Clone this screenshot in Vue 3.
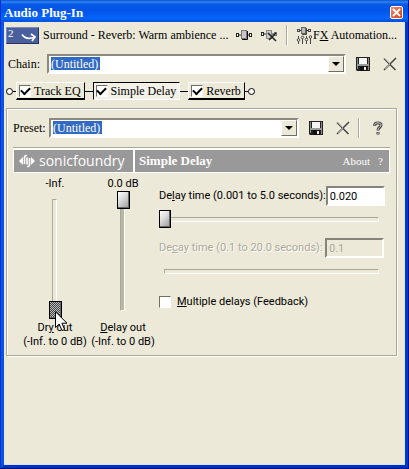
<script setup>
import { ref } from 'vue'

const chain = ref('(Untitled)')
const preset = ref('(Untitled)')
const plugins = ref([
  { id: 'eq', name: 'Track EQ', on: true, active: false },
  { id: 'delay', name: 'Simple Delay', on: true, active: true },
  { id: 'reverb', name: 'Reverb', on: true, active: false }
])
const dryOut = ref(0)
const delayOut = ref(100)
const delayPos = ref(0)
const decayPos = ref(0)
const delayTime = ref('0.020')
const decayTime = ref('0.1')
const feedback = ref(false)
</script>

<template>
  <div class="window">
    <header class="titlebar">
      <h1>Audio Plug-In</h1>
      <button class="close" type="button" aria-label="Close">
        <svg width="9" height="9" viewBox="0 0 9 9"><path d="M1 1L8 8M8 1L1 8" stroke="#fff" stroke-width="1.8" /></svg>
      </button>
    </header>

    <main class="body">
      <div class="toolbar">
        <div class="badge">
          <span class="num">2</span>
          <svg class="swoosh" width="18" height="12" viewBox="0 0 18 12"><path d="M2 3.500C5 8 9 8 14 6.500M11 3L15 6L12 10" fill="none" stroke="#fff" stroke-width="1.700" /></svg>
        </div>
        <span class="track">Surround - Reverb: Warm ambience ...</span>
        <button class="icon" type="button" aria-label="Plug-in chooser">
          <svg width="16" height="12" viewBox="0 0 16 12">
            <path d="M2 6H14" stroke="#222" />
            <rect x=".5" y="4.500" width="2" height="3" fill="#fff" stroke="#222" />
            <rect x="13.500" y="4.500" width="2" height="3" fill="#fff" stroke="#222" />
            <rect x="5.500" y="1.500" width="5" height="8" fill="#c8c8c8" stroke="#777" />
            <path d="M11.500 2V10.500H6" fill="none" stroke="#111" />
          </svg>
        </button>
        <button class="icon remove" type="button" aria-label="Remove plug-in">
          <svg width="17" height="14" viewBox="0 0 17 14">
            <path d="M2 6H14" stroke="#222" />
            <rect x=".5" y="4.500" width="2" height="3" fill="#fff" stroke="#222" />
            <rect x="13.500" y="4.500" width="2" height="3" fill="#fff" stroke="#777" />
            <rect x="5.500" y="2.500" width="5" height="8" fill="#c8c8c8" stroke="#888" />
            <path d="M7 5L15 13M15 5L8 12" stroke="#222" stroke-width="1.600" />
          </svg>
        </button>
        <span class="sep"></span>
        <button class="fx" type="button">
          <svg width="16" height="17" viewBox="0 0 16 17">
            <path d="M3 3.500H13" stroke="#222" />
            <rect x="1.500" y="2.500" width="2" height="2" fill="#fff" stroke="#444" />
            <rect x="12.500" y="2.500" width="2" height="2" fill="#fff" stroke="#444" />
            <rect x="5.500" y=".5" width="4" height="6" fill="#bbb" stroke="#666" />
            <path d="M10.500 1V7.500H6M2.500 9V17M6.500 9V17M10.500 9V17M14.500 9V17" fill="none" stroke="#444" />
            <g fill="#fff" stroke="#444">
              <circle cx="2.500" cy="13" r="1.300" /><circle cx="6.500" cy="10.500" r="1.300" />
              <circle cx="10.500" cy="12.500" r="1.300" /><circle cx="14.500" cy="10" r="1.300" />
            </g>
          </svg>
          <span>F<u>X</u> Automation...</span>
        </button>
      </div>

      <div class="row chain-row">
        <label for="chain">Chain:</label>
        <div class="combo">
          <select id="chain" v-model="chain"><option>(Untitled)</option></select>
          <span class="drop"></span>
        </div>
        <button class="icon save" type="button" aria-label="Save chain">
          <svg width="14" height="14" viewBox="0 0 14 14">
            <path d="M0 0H14V14H1L0 13Z" fill="#222" /><path d="M1 1H2V12H1ZM12 1H13V13H12Z" fill="#8c8c8c" />
            <rect x="3" y="1" width="8" height="6" fill="#f4f4f4" /><rect x="1" y="7" width="12" height="2" fill="#9a9a9a" />
            <rect x="4" y="9" width="7" height="5" fill="#111" /><rect x="8" y="10" width="2" height="3" fill="#eee" />
          </svg>
        </button>
        <button class="icon" type="button" aria-label="Delete chain">
          <svg width="14" height="14" viewBox="0 0 14 14">
            <path d="M1 1.500L12.500 13M13 1L1 13" stroke="#444" stroke-width="1.500" /><path d="M1 .8L7 7M7 7L2 12" stroke="#bbb" stroke-width=".8" />
          </svg>
        </button>
      </div>

      <div class="signal">
        <span class="node"></span><span class="wire short"></span>
        <template v-for="(p, i) in plugins" :key="p.id">
          <span v-if="i" class="wire"></span>
          <label class="plug" :class="{ active: p.active }">
            <input v-model="p.on" type="checkbox" class="tick" />
            <span>{{ p.name }}</span>
          </label>
        </template>
        <span class="wire short"></span><span class="node"></span>
      </div>

      <section class="panel">
        <div class="row">
          <label for="preset">Preset:</label>
          <div class="combo">
            <select id="preset" v-model="preset"><option>(Untitled)</option></select>
            <span class="drop"></span>
          </div>
          <button class="icon save" type="button" aria-label="Save preset">
            <svg width="14" height="14" viewBox="0 0 14 14">
              <path d="M0 0H14V14H1L0 13Z" fill="#222" /><path d="M1 1H2V12H1ZM12 1H13V13H12Z" fill="#8c8c8c" />
              <rect x="3" y="1" width="8" height="6" fill="#f4f4f4" /><rect x="1" y="7" width="12" height="2" fill="#9a9a9a" />
              <rect x="4" y="9" width="7" height="5" fill="#111" /><rect x="8" y="10" width="2" height="3" fill="#eee" />
            </svg>
          </button>
          <button class="icon" type="button" aria-label="Delete preset">
            <svg width="14" height="14" viewBox="0 0 14 14">
              <path d="M1 1.500L12.500 13M13 1L1 13" stroke="#444" stroke-width="1.500" /><path d="M1 .8L7 7M7 7L2 12" stroke="#bbb" stroke-width=".8" />
            </svg>
          </button>
          <span class="sep"></span>
          <button class="icon help" type="button" aria-label="Help">
            <svg width="10" height="14" viewBox="0 0 10 14">
              <path d="M1.800 5V3.500C2 1.500 8 1 8 4C8 6.500 5 6 5 9.500M5 11V13.500" fill="none" stroke="#444" stroke-width="3" />
              <path d="M1.800 4.500V3.500C2 1.500 8 1 8 4C8 6.500 5 6 5 9M5 11.500V13" fill="none" stroke="#ddd" stroke-width="1" />
            </svg>
          </button>
        </div>

        <div class="banner">
          <div class="brand">
            <svg width="16" height="14" viewBox="0 0 16 14">
              <path d="M0 7L4 3V11ZM16 7L12 3V11Z" fill="#fff" />
              <path d="M8 1.500Q5.500 1 5.500 4V10M8 12.500Q10.500 13 10.500 10V4M8 3.500V10.500" fill="none" stroke="#fff" stroke-width="1.600" />
            </svg>
            <span>sonicfoundry</span>
          </div>
          <div class="name">
            <h2>Simple Delay</h2>
            <a href="#about">About</a>
            <a href="#help">?</a>
          </div>
        </div>

        <div class="controls">
          <div class="fader">
            <output for="dry">-Inf.</output>
            <div class="vslot">
              <input id="dry" v-model="dryOut" type="range" min="0" max="100" class="focused" />
              <svg class="pointer" width="13" height="21" viewBox="0 0 13 21">
                <path d="M.5 .8V16.500L4.200 13L7 19.500L9.600 18.400L6.900 12.200H12Z" fill="#fff" stroke="#000" />
              </svg>
            </div>
            <label for="dry">Dr<u>y</u> out<br />(-Inf. to 0 dB)</label>
          </div>
          <div class="fader">
            <output for="wet">0.0 dB</output>
            <div class="vslot filled">
              <input id="wet" v-model="delayOut" type="range" min="0" max="100" />
            </div>
            <label for="wet"><u>D</u>elay out<br />(-Inf. to 0 dB)</label>
          </div>

          <div class="times">
            <div class="field">
              <label for="delay">De<u>l</u>ay time (0.001 to 5.0 seconds):</label>
              <input id="delay" v-model="delayTime" type="text" />
            </div>
            <div class="hslot">
              <input v-model="delayPos" type="range" min="0" max="100" aria-label="Delay time" />
            </div>
            <div class="field off">
              <label for="decay">De<u>c</u>ay time (0.1 to 20.0 seconds):</label>
              <input id="decay" v-model="decayTime" type="text" disabled />
            </div>
            <div class="hslot">
              <input v-model="decayPos" type="range" min="0" max="100" disabled aria-label="Decay time" />
            </div>
            <label class="check">
              <input v-model="feedback" type="checkbox" class="tick" />
              <span><u>M</u>ultiple delays (Feedback)</span>
            </label>
          </div>
        </div>
      </section>
    </main>
  </div>
</template>

<style>
body {
  background: #ece9d8;
}
</style>

<style scoped>
* {
  box-sizing: border-box;
}
.window {
  display: flex;
  flex-direction: column;
  min-height: 100vh;
  border: solid;
  border-width: 0 1px 1px;
  border-color: #0831d9 #00138c #00138c #0831d9;
  background: #ece9d8;
  color: #000;
  font-family: "Liberation Serif", serif;
  font-size: 12px;
  line-height: 16px;
}
.titlebar {
  display: flex;
  align-items: center;
  justify-content: space-between;
  height: 22px;
  padding: 3px 5px 0 3px;
  background: linear-gradient(#0a50c8 0, #2f86f5 2px, #0a5ae6 4px, #0054e6 10px, #0664fc 18px, #0050d8 22px);
}
h1 {
  margin: 0;
  color: #fff;
  font-size: 13px;
  line-height: 16px;
}
.close {
  display: flex;
  align-items: center;
  justify-content: center;
  width: 13px;
  height: 13px;
  padding: 0;
  border: 1px solid #fff;
  border-radius: 2px;
  background: linear-gradient(135deg, #f08a6c, #d8401c);
}
.body {
  flex: 1;
  padding: 2px 8px 4px 2px;
  border: solid;
  border-width: 0 3px 3px;
  border-color: #0a55e0 #0038c0 #0030c0 #0a55e0;
  box-shadow: inset -1px -1px 0 #d4e4f4;
}
button,
input,
select {
  margin: 0;
  color: inherit;
  font: inherit;
}
.toolbar {
  display: flex;
  align-items: center;
  height: 22px;
}
.badge {
  display: flex;
  width: 33px;
  height: 17px;
  padding-left: 1px;
  border: solid 1px;
  border-color: #7c8cc0 #26325e #26325e #7c8cc0;
  background: #4a5f9e;
  color: #fff;
}
.num {
  font-size: 11px;
  line-height: 10px;
}
.swoosh {
  margin: 3px 0 0 6px;
}
.track {
  flex: 1;
  padding-left: 4px;
  white-space: nowrap;
}
.icon {
  display: flex;
  flex: none;
  margin-left: 13px;
  padding: 0;
  border: 0;
  background: none;
}
.toolbar .icon {
  margin-left: 6px;
}
.toolbar .remove {
  margin-left: 9px;
}
.sep {
  width: 2px;
  height: 20px;
  margin: 0 0 0 8px;
  border-left: 1px solid #aca899;
  border-right: 1px solid #fff;
}
.fx {
  display: flex;
  align-items: center;
  gap: 1px;
  margin-left: 8px;
  padding: 0;
  border: 0;
  background: none;
  white-space: nowrap;
}
.row {
  display: flex;
  align-items: center;
}
.row label {
  flex: none;
  width: 36px;
}
.chain-row {
  margin-top: 8px;
  padding-left: 2px;
}
.chain-row label {
  width: 39px;
}
.combo {
  position: relative;
  flex: 1;
  height: 20px;
  border: 2px solid;
  border-color: #8c8a7c #fff #fff #8c8a7c;
}
.combo select {
  display: block;
  width: 100%;
  height: 16px;
  padding: 0 18px 0 2px;
  border: 0;
  border-radius: 0;
  outline: 0;
  appearance: none;
  background: linear-gradient(#316ac5, #316ac5) 2px 1px / 49px 13px no-repeat #fff;
  color: #fff;
  line-height: 15px;
}
.drop {
  position: absolute;
  top: 0;
  right: 0;
  display: flex;
  align-items: center;
  justify-content: center;
  width: 16px;
  height: 16px;
  border: 1px solid;
  border-color: #fff #716f64 #716f64 #fff;
  background: #ece9d8;
  pointer-events: none;
}
.drop::after {
  content: "";
  border: 4px solid transparent;
  border-top-color: #000;
  border-bottom: 0;
}
.signal {
  display: flex;
  align-items: center;
  margin-top: 8px;
}
.node {
  width: 7px;
  height: 7px;
  border: 1px solid #000;
  border-radius: 50%;
  background: #fff;
}
.wire {
  width: 8px;
  height: 1px;
  background: #000;
}
.short {
  width: 3px;
}
.plug {
  display: flex;
  align-items: center;
  gap: 3px;
  height: 18px;
  padding: 0 3px 0 2px;
  border: solid;
  border-width: 1px 1px 2px 1px;
  border-color: #fff #000 #000 #fff;
  white-space: nowrap;
}
.plug.active {
  border-width: 1px;
  border-color: #000 #fff #fff #000;
  background: #f3f1e8;
}
.tick {
  display: grid;
  flex: none;
  place-items: center;
  width: 12px;
  height: 12px;
  border: 1px solid;
  border-color: #716f64 #fff #fff #716f64;
  appearance: none;
  background: #fff;
}
.tick:checked::after {
  content: "";
  width: 7px;
  height: 4px;
  margin-top: -2px;
  border: solid #000;
  border-width: 0 0 2px 2px;
  transform: rotate(-45deg);
}
.panel {
  margin-top: 8px;
  padding: 9px 6px 6px;
  border: 1px solid #aca899;
  box-shadow: inset 1px 1px 0 #fff, 1px 1px 0 #fff;
}
.icon.save {
  margin-left: 10px;
}
.help {
  margin: 0 7px 0 13px;
}
.banner {
  display: flex;
  gap: 2px;
  margin-top: 9px;
  padding: 2px 1px 1px;
  border-top: 1px solid #aca899;
  background: #fff;
  color: #fff;
}
.brand {
  display: flex;
  flex: none;
  align-items: center;
  gap: 4px;
  width: 119px;
  height: 22px;
  padding-left: 5px;
  background: #999;
  font: 14px/20px "Open Sans", sans-serif;
}
.name {
  display: flex;
  flex: 1;
  align-items: center;
  gap: 8px;
  padding: 0 6px 0 4px;
  background: #999;
}
h2 {
  flex: 1;
  margin: 0;
  font-size: 13px;
  line-height: 16px;
}
.name a {
  color: #fff;
  font-size: 11px;
  text-decoration: none;
}
.controls {
  display: flex;
  margin-top: 4px;
  font: 11px/14px Roboto, "Liberation Sans", sans-serif;
}
.fader {
  display: flex;
  flex: none;
  flex-direction: column;
  align-items: center;
  width: 68px;
  text-align: center;
  white-space: nowrap;
}
.fader:first-child {
  margin-left: 8px;
}
.vslot {
  position: relative;
  width: 14px;
  height: 128px;
  margin-bottom: 2px;
}
.vslot::before {
  content: "";
  position: absolute;
  inset: 8px 5px 8px 4px;
  border: 1px solid;
  border-color: #aca899 #fff #fff #aca899;
}
.filled::before {
  background: #bab7a9;
}
input[type="range"] {
  position: relative;
  display: block;
  width: 100%;
  height: 18px;
  appearance: none;
  background: none;
}
.vslot input[type="range"] {
  width: 14px;
  height: 128px;
  writing-mode: vertical-lr;
  direction: rtl;
}
input[type="range"]::-webkit-slider-thumb {
  width: 12px;
  height: 18px;
  border: 1px solid #000;
  border-radius: 0;
  appearance: none;
  background: linear-gradient(135deg, #fff, #ddd 40%, #999);
  box-shadow: inset -1px -1px 0 #666;
}
.vslot input[type="range"]::-webkit-slider-thumb {
  width: 13px;
  height: 18px;
}
.focused::-webkit-slider-thumb {
  background: repeating-conic-gradient(#444 0 25%, #bbb 0 50%) 0 0 / 2px 2px !important;
}
input[type="range"]:disabled::-webkit-slider-thumb {
  visibility: hidden;
}
.pointer {
  position: absolute;
  top: 120px;
  left: 7px;
}
.times {
  flex: 1;
  min-width: 0;
  padding: 9px 6px 0 2px;
}
.field {
  display: flex;
  align-items: center;
  justify-content: space-between;
  white-space: nowrap;
}
.field input {
  width: 59px;
  height: 20px;
  padding: 0 2px;
  border: 2px solid;
  border-color: #85837a #fff #fff #85837a;
  border-radius: 0;
  outline: 0;
  background: #fff;
}
.off {
  color: #aca899;
  text-shadow: 1px 1px 0 #fff;
}
.off input {
  background: #ece9d8;
}
.hslot {
  position: relative;
  margin: 4px 5px 10px 0;
}
.hslot::before {
  content: "";
  position: absolute;
  inset: 7px 0 6px 5px;
  border: 1px solid;
  border-color: #aca899 #fff #fff #aca899;
}
.check {
  display: flex;
  align-items: center;
  gap: 6px;
  padding-top: 5px;
}
</style>
